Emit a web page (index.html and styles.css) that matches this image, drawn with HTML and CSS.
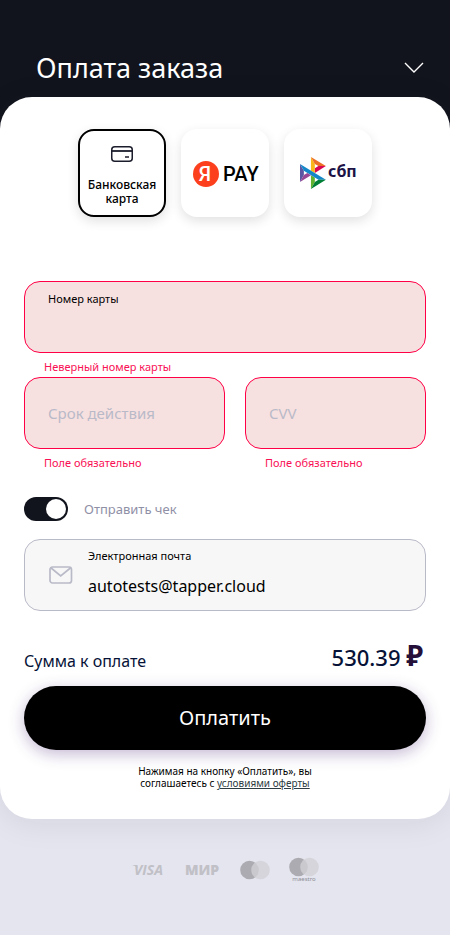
FILE: index.html
```html
<!DOCTYPE html>
<html lang="ru">
<head>
<meta charset="utf-8">
<meta name="viewport" content="width=device-width, initial-scale=1">
<title>Оплата заказа</title>
<link rel="stylesheet" href="styles.css">
</head>
<body>
<header class="header">
  <h1 class="title">Оплата заказа</h1>
  <button class="collapse" type="button" aria-label="Свернуть">
    <svg width="20" height="12" viewBox="0 0 20 12" fill="none" stroke="#fff" stroke-width="1.4"><path d="M1 1l9 9 9-9"/></svg>
  </button>
</header>
<main class="card">
  <div class="methods">
    <button class="method method-active" type="button">
      <svg width="22" height="16" viewBox="0 0 22 16" fill="none" stroke="#1b1d2c"><rect x=".75" y=".75" width="20.5" height="14.5" rx="3" stroke-width="1.5"/><path d="M1 5h20" stroke-width="1.8"/><path d="M14 11h4" stroke-width="1.5"/></svg>
      <span>Банковская карта</span>
    </button>
    <button class="method" type="button" aria-label="Яндекс Pay">
      <svg width="66" height="28" viewBox="0 0 66 28"><circle cx="14" cy="15" r="13" fill="#fc3f1d"/><text class="ya-text" x="13" y="22">Я</text><text class="pay-text" x="31" y="22">PAY</text></svg>
    </button>
    <button class="method" type="button" aria-label="СБП">
      <svg width="58" height="32" viewBox="0 0 58 32"><g transform="translate(1) scale(.266)"><path d="M0 26.120l14.532 25.975v15.844L.017 93.863z" fill="#5b57a2"/><path d="M55.797 42.643l13.617-8.346 27.868-.026-41.485 25.414z" fill="#d90751"/><path d="M55.720 25.967l.077 34.390-14.566-8.950V0z" fill="#fab718"/><path d="M97.282 34.271l-27.869.026-13.693-8.330L41.231 0z" fill="#ed6f26"/><path d="M55.797 94.007V77.322l-14.566-8.780.008 51.458z" fill="#63b22f"/><path d="M69.380 85.737L14.531 52.095 0 26.120l97.223 59.583z" fill="#1487c9"/><path d="M41.240 120l14.556-25.993 13.583-8.270 27.843-.034z" fill="#017f36"/><path d="M.017 93.863l41.333-25.320-13.896-8.526-12.922 7.922z" fill="#984995"/></g><text class="sbp-text" x="29" y="20">сбп</text></svg>
    </button>
  </div>
  <form class="form">
    <div class="group">
      <div class="field field-error"><label class="caption" for="number">Номер карты</label><input id="number" type="text" inputmode="numeric"></div>
      <p class="error">Неверный номер карты</p>
    </div>
    <div class="row">
      <div class="group">
        <div class="field field-error"><input type="text" placeholder="Срок действия" aria-label="Срок действия"></div>
        <p class="error">Поле обязательно</p>
      </div>
      <div class="group">
        <div class="field field-error"><input type="text" placeholder="CVV" aria-label="CVV"></div>
        <p class="error">Поле обязательно</p>
      </div>
    </div>
    <label class="receipt"><input class="switch" type="checkbox" role="switch" checked><span>Отправить чек</span></label>
    <div class="field field-mail">
      <svg width="24" height="18" viewBox="0 0 24 18" fill="none" stroke="#b9bac8" stroke-width="1.7"><rect x="1" y="1" width="21.500" height="16" rx="2.500"/><path d="M1.500 1.500l10.200 8.500L22 1.500"/></svg>
      <div class="mail"><label class="caption" for="email">Электронная почта</label><input id="email" type="email" value="autotests@tapper.cloud"></div>
    </div>
    <div class="total"><span class="total-label">Сумма к оплате</span><span class="amount">530.39 <b>₽</b></span></div>
    <button class="pay" type="button">Оплатить</button>
  </form>
  <p class="legal">Нажимая на кнопку «Оплатить», вы<br>соглашаетесь с <a href="#">условиями оферты</a></p>
</main>
<footer class="footer">
  <svg width="34" height="18" viewBox="0 0 34 18"><path d="M0 4h5l1 3C4 5 2 4.500 0 4z" fill="#c0c0c6"/><text class="visa" x="2" y="14">VISA</text></svg>
  <svg width="36" height="18" viewBox="0 0 36 18"><text class="mir" x="0" y="14">МИР</text></svg>
  <svg width="30" height="20" viewBox="0 0 30 20"><circle cx="9.500" cy="10" r="9.300" fill="#acabb1"/><circle cx="20.500" cy="10" r="9.300" fill="#d1d1d6" fill-opacity=".8"/></svg>
  <svg width="30" height="26" viewBox="0 0 30 26"><circle cx="9.500" cy="10" r="9.300" fill="#acabb1"/><circle cx="20.500" cy="10" r="9.300" fill="#d1d1d6" fill-opacity=".8"/><text class="maestro" x="15" y="24">maestro</text></svg>
</footer>
</body>
</html>
```
FILE: styles.css
```css
* { box-sizing: border-box; }
body { margin: 0; background: #e5e5ef; color: #000; font-family: "Noto Sans", sans-serif; font-size: 12px; line-height: 16px; }
h1, p { margin: 0; }
svg { overflow: visible; }
button { padding: 0; border: 0; background: none; color: inherit; font: inherit; cursor: pointer; }
.header { display: flex; align-items: center; justify-content: space-between; background: #12141d; padding: 48px 26px 58px 36px; margin-bottom: -49px; }
.title { color: #fff; font-size: 27px; line-height: 40px; font-weight: 400; }
.collapse { display: flex; }
.card { position: relative; background: #fff; border-radius: 32px; padding: 32px 24px 30px; box-shadow: 0 4px 32px rgba(18, 20, 45, .08); }
.methods { display: flex; justify-content: center; gap: 15px; margin-bottom: 64px; }
.method { display: flex; flex-direction: column; align-items: center; justify-content: center; gap: 16px; width: 88px; height: 88px; border-radius: 16px; box-shadow: 0 4px 12px rgba(0, 0, 0, .12); font-size: 12px; line-height: 14px; font-weight: 500; }
.method-active { padding-top: 5px; border: 2px solid #000; }
.ya-text { font: 500 20px Roboto, sans-serif; fill: #fff; text-anchor: middle; }
.pay-text { font: 500 20px Roboto, sans-serif; }
.sbp-text { font: 700 16px "Noto Sans", sans-serif; fill: #1d1346; }
.field { display: flex; flex-direction: column; justify-content: center; height: 72px; padding: 0 23px; border: 1px solid #b9bac8; border-radius: 16px; background: #f7f7f7; }
.field-error { border-color: #ff0046; background: #f7e0e0; }
.field input { width: 100%; min-width: 0; height: 36px; padding: 0; border: 0; outline: 0; background: none; font: inherit; font-size: 16px; }
.field input::placeholder { color: #b9bac8; font-size: 15px; opacity: 1; }
.caption { font-size: 11px; line-height: 16px; }
.error { padding: 6px 20px 0; height: 24px; color: #f91155; font-size: 11px; line-height: 16px; }
.row { display: grid; grid-template-columns: 201fr 181fr; gap: 20px; }
.receipt { display: flex; align-items: center; gap: 16px; margin-top: 24px; color: #8f90a6; font-size: 13px; line-height: 24px; }
.switch { appearance: none; display: flex; justify-content: flex-end; width: 44px; height: 24px; margin: 0; padding: 2px; border-radius: 12px; background: #12141d; }
.switch::before { content: ""; width: 20px; height: 20px; border-radius: 50%; background: #fff; }
.switch:not(:checked) { justify-content: flex-start; }
.field-mail { flex-direction: row; align-items: center; justify-content: flex-start; gap: 15px; margin-top: 18px; padding-left: 24px; }
.mail { flex: 1; display: flex; flex-direction: column; gap: 6px; }
.field-mail input { height: 32px; }
.total { display: flex; align-items: flex-end; justify-content: space-between; margin-top: 28px; padding-right: 3px; color: #061237; }
.total-label { font-size: 16px; line-height: 24px; }
.amount { font-size: 22px; line-height: 32px; font-weight: 500; }
.amount b { color: #25103a; font-size: 28px; line-height: 32px; }
.pay { width: 100%; height: 64px; margin-top: 13px; border-radius: 32px; background: #000; color: #fff; font-size: 20px; box-shadow: 0 4px 16px rgba(60, 20, 110, .3); }
.legal { margin-top: 15px; text-align: center; font-size: 10px; line-height: 12px; }
.legal a { color: #2d3b42; }
.footer { display: flex; justify-content: center; align-items: center; gap: 19px; padding: 38px 0; }
.visa { font: italic 700 14px "Open Sans", sans-serif; fill: #c0c0c6; }
.mir { font: 800 14px "Open Sans", sans-serif; fill: #c0c0c6; }
.maestro { font: 6px "Noto Sans", sans-serif; fill: #8d8d96; text-anchor: middle; }
```
